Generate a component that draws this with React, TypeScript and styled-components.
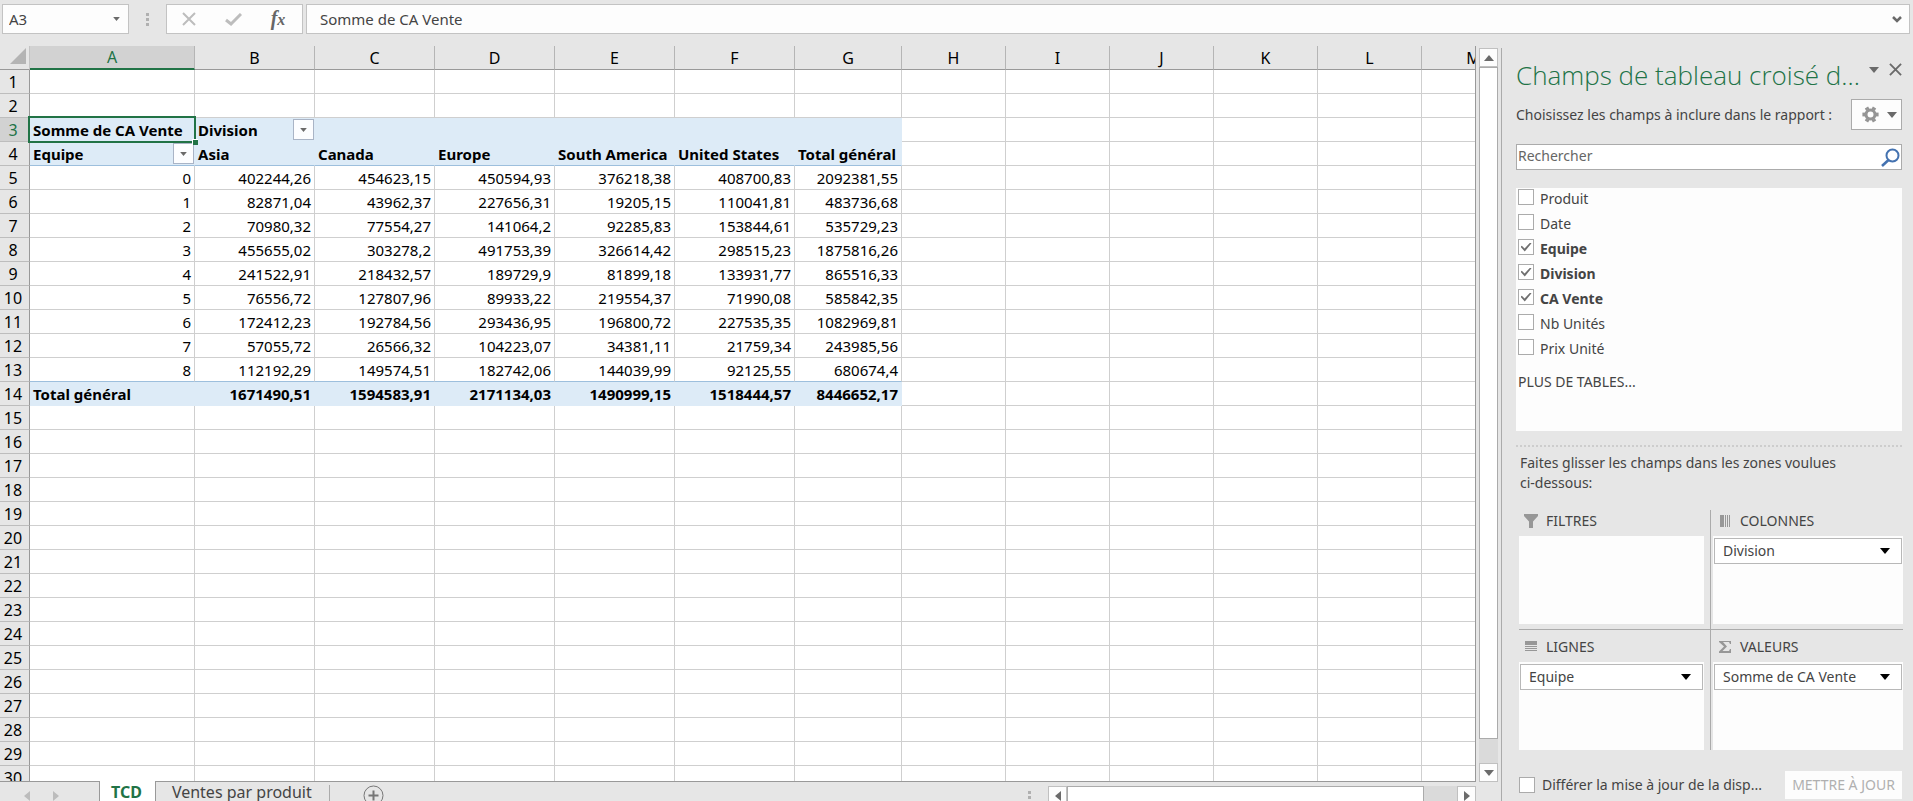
import React from 'react';
import styled, { createGlobalStyle, css } from 'styled-components';

const c = {
  chrome: '#e6e6e6',
  line: '#ababab',
  box: '#c3c3c3',
  grid: '#cfcfcf',
  edge: '#999999',
  green: '#217346',
  text: '#444444',
  fill: '#ddebf7',
  fillLine: '#9dbfdd',
  icon: '#6a6a6a',
};

const Global = createGlobalStyle`
  *, *::before, *::after { box-sizing: border-box; }
  body {
    margin: 0;
    background: ${c.chrome};
    color: ${c.text};
    font: 14px/20px "Noto Sans", "Open Sans", sans-serif;
  }
  button, input { font: inherit; color: inherit; margin: 0; }
  button { padding: 0; border: 0; background: none; }
  svg { display: block; flex: none; }
`;

const Shell = styled.div`
  display: flex;
  flex-direction: column;
  height: 100vh;
  overflow: hidden;
`;

/* ---------- formula bar ---------- */

const FormulaBar = styled.header`
  display: flex;
  flex: none;
  padding: 4px 3px 12px 2px;
  font-size: 15px;
`;

const BarBox = styled.div<{ $grow?: boolean; $width?: number }>`
  display: flex;
  align-items: center;
  height: 30px;
  border: 1px solid ${c.box};
  background: #fdfdfd;
  ${(p) => (p.$grow ? 'flex: 1; min-width: 0;' : `flex: none; width: ${p.$width}px;`)}
`;

const BarInput = styled.input<{ $indent: number }>`
  flex: 1;
  min-width: 0;
  height: 100%;
  padding: 0 0 0 ${(p) => p.$indent}px;
  border: 0;
  outline: 0;
  background: transparent;
`;

const BarButton = styled.button`
  display: flex;
  align-items: center;
  justify-content: center;
  width: 24px;
  height: 100%;
`;

const ToolGroup = styled(BarBox)`
  justify-content: space-between;
  padding: 0 12px 0 10px;
  margin-right: 3px;
`;

const Grip = styled.div`
  display: flex;
  flex: none;
  flex-direction: column;
  justify-content: center;
  align-items: center;
  gap: 2px;
  width: 37px;
  height: 30px;
  &::before, &::after { content: ''; }
  &::before, &::after, & > i { width: 3px; height: 3px; background: #b0b0b0; }
`;

const Fx = styled.span`
  font: italic bold 20px/24px "Liberation Serif", serif;
  color: #666;
  & > small { font-size: 16px; }
`;

/* ---------- sheet ---------- */

const Main = styled.div`
  display: flex;
  flex: 1;
  min-height: 0;
`;

const Workbook = styled.main`
  display: flex;
  flex: 1;
  flex-direction: column;
  min-width: 0;
`;

const SheetArea = styled.div`
  display: flex;
  flex: 1;
  min-height: 0;
`;

const Viewport = styled.div`
  flex: 1;
  min-width: 0;
  overflow: hidden;
  border-right: 1px solid ${c.edge};
  border-bottom: 1px solid ${c.edge};
`;

const Sheet = styled.table`
  width: 1526px;
  table-layout: fixed;
  border-collapse: separate;
  border-spacing: 0;
  color: #000;
  font-size: 15px;
  line-height: 21px;
`;

const Col = styled.col<{ $width: number }>`
  width: ${(p) => p.$width}px;
`;

const Corner = styled.td`
  height: 24px;
  padding: 0 3px 3px 0;
  border-right: 1px solid #c4c4c4;
  border-bottom: 1px solid ${c.edge};
  background: ${c.chrome};
  & > svg { margin-left: auto; }
`;

const ColHead = styled.th<{ $active?: boolean }>`
  height: 24px;
  padding: 2px 0 0;
  border-right: 1px solid #b5b5b5;
  border-bottom: 1px solid ${c.edge};
  background: ${c.chrome};
  font-size: 16px;
  font-weight: 400;
  ${(p) =>
    p.$active &&
    css`
      padding-top: 1px;
      border-bottom: 2px solid ${c.green};
      background: #d2d2d2;
      color: ${c.green};
    `}
`;

const RowHead = styled.th<{ $active?: boolean }>`
  height: 24px;
  padding: 2px 3px 0 0;
  border-right: 1px solid ${c.edge};
  border-bottom: 1px solid #bdbdbd;
  background: ${(p) => (p.$active ? '#d2d2d2' : c.chrome)};
  color: ${(p) => (p.$active ? c.green : '#000')};
  font-size: 16px;
  font-weight: 400;
`;

type CellStyle = { $filled?: boolean; $bold?: boolean; $num?: boolean; $rule?: boolean };

const Cell = styled.td<CellStyle>`
  position: relative;
  height: 24px;
  padding: 2px 3px 0;
  border-right: 1px solid ${(p) => (p.$filled ? c.fill : c.grid)};
  border-bottom: 1px solid ${(p) => (p.$rule ? c.fillLine : p.$filled ? c.fill : c.grid)};
  background: ${(p) => (p.$filled ? c.fill : '#fff')};
  font-weight: ${(p) => (p.$bold ? 700 : 400)};
  text-align: ${(p) => (p.$num ? 'right' : 'left')};
  white-space: nowrap;
`;

const Selection = styled.span`
  position: absolute;
  z-index: 1;
  inset: -2px;
  border: 2px solid ${c.green};
  pointer-events: none;
  &::after {
    content: '';
    position: absolute;
    right: -4px;
    bottom: -4px;
    width: 6px;
    height: 6px;
    border: solid #fff;
    border-width: 1px 0 0 1px;
    background: ${c.green};
  }
`;

const FilterButton = styled.button`
  position: absolute;
  top: 1px;
  right: 0;
  display: flex;
  align-items: center;
  justify-content: center;
  width: 21px;
  height: 21px;
  border: 1px solid #a9b4c6;
  background: #fcfdff;
`;

/* ---------- scroll bars ---------- */

const VScroll = styled.div`
  display: flex;
  flex: none;
  flex-direction: column;
  width: 25px;
  padding: 2px 3px 0;
`;

const HScroll = styled.div`
  display: flex;
  flex: none;
  width: 428px;
  height: 19px;
  margin: 4px 25px 0 0;
`;

const ScrollButton = styled.button`
  display: flex;
  flex: none;
  align-items: center;
  justify-content: center;
  width: 19px;
  height: 19px;
  border: 1px solid #c0c0c0;
  background: #fdfdfd;
`;

const Thumb = styled.div`
  flex: 1;
  border: 1px solid ${c.line};
  background: #fff;
`;

const Track = styled.div<{ $size: number }>`
  flex: 0 0 ${(p) => p.$size}px;
  background: #dadada;
`;

/* ---------- sheet tabs ---------- */

const TabStrip = styled.footer`
  display: flex;
  flex: none;
  align-items: flex-start;
  height: 19px;
  font-size: 16px;
  line-height: 20px;
`;

const TabNav = styled.div`
  display: flex;
  flex: none;
  gap: 23px;
  width: 99px;
  padding: 9px 0 0 24px;
`;

const Tab = styled.button<{ $active?: boolean }>`
  flex: none;
  height: 24px;
  ${(p) =>
    p.$active
      ? css`
          position: relative;
          margin-top: -1px;
          padding: 0 13px 2px 11px;
          border: solid ${c.edge};
          border-width: 0 1px;
          background: #fff;
          color: ${c.green};
          font-weight: 700;
        `
      : css`
          padding: 0 17px 4px 16px;
        `}
`;

const TabDivider = styled.span`
  width: 1px;
  height: 20px;
  margin-top: 3px;
  background: ${c.line};
`;

const AddSheet = styled.button`
  margin: 3px 0 0 33px;
`;

const Spacer = styled.div`
  flex: 1;
`;

/* ---------- field list pane ---------- */

const Pane = styled.aside`
  flex: none;
  width: 412px;
  margin-top: 2px;
  padding: 10px 11px 0 14px;
  border-left: 1px solid ${c.line};
`;

const PaneHead = styled.div`
  display: flex;
  align-items: flex-start;
  justify-content: space-between;
  height: 34px;
`;

const PaneTitle = styled.h1`
  margin: 0;
  color: ${c.green};
  font-family: "Open Sans", "Noto Sans", sans-serif;
  font-size: 26px;
  font-weight: 300;
  line-height: 34px;
  white-space: nowrap;
`;

const PaneButtons = styled.div`
  display: flex;
  align-items: center;
  gap: 10px;
  padding-top: 5px;
`;

const Intro = styled.div`
  display: flex;
  align-items: center;
  justify-content: space-between;
  margin-top: 7px;
`;

const GearButton = styled.button`
  display: flex;
  align-items: center;
  justify-content: space-between;
  width: 51px;
  height: 31px;
  padding: 0 4px 0 10px;
  border: 1px solid ${c.line};
  background: #fdfdfd;
`;

const Search = styled.label`
  display: flex;
  align-items: center;
  height: 26px;
  margin-top: 14px;
  padding-right: 1px;
  border: 1px solid ${c.line};
  background: #fff;
`;

const SearchInput = styled.input`
  flex: 1;
  min-width: 0;
  padding: 0 0 2px 1px;
  border: 0;
  outline: 0;
  background: transparent;
  &::placeholder { color: #666; opacity: 1; }
`;

const FieldList = styled.div`
  margin-top: 18px;
  padding: 1px 2px 39px;
  background: #fdfdfd;
`;

const FieldRow = styled.label<{ $bold?: boolean }>`
  display: flex;
  align-items: flex-start;
  gap: 6px;
  height: 25px;
  font-weight: ${(p) => (p.$bold ? 700 : 400)};
`;

const Check = styled.input`
  appearance: none;
  flex: none;
  display: grid;
  place-items: center;
  width: 16px;
  height: 16px;
  border: 1px solid ${c.line};
  background: #fff;
  &:checked::before {
    content: '';
    width: 11px;
    height: 9px;
    background: #707070;
    clip-path: polygon(0 48%, 12% 36%, 37% 68%, 88% 0, 100% 9%, 39% 100%);
  }
`;

const MoreTables = styled.a`
  display: block;
  margin-top: 8px;
  color: inherit;
  text-decoration: none;
`;

const Splitter = styled.div`
  height: 3px;
  margin-top: 14px;
  background: radial-gradient(circle at 1px 1px, #cdcdcd 1px, transparent 1px) 0 0 / 4px 3px;
`;

const Hint = styled.p`
  margin: 5px 0 0;
  padding: 0 59px 0 4px;
`;

const NoBreak = styled.span`
  white-space: nowrap;
`;

const Zones = styled.div`
  display: grid;
  grid-template-columns: 192px 1fr;
  margin: 17px -1px 0 3px;
`;

const Zone = styled.section<{ $right?: boolean; $lower?: boolean }>`
  padding: ${(p) => (p.$lower ? 6 : 0)}px ${(p) => (p.$right ? 0 : 6)}px ${(p) => (p.$lower ? 0 : 5)}px
    ${(p) => (p.$right ? 2 : 0)}px;
  border-right: ${(p) => (p.$right ? 0 : 1)}px solid ${c.line};
  border-bottom: ${(p) => (p.$lower ? 0 : 1)}px solid ${c.line};
`;

const ZoneTitle = styled.h2`
  display: flex;
  align-items: center;
  gap: 8px;
  height: 26px;
  margin: 0;
  padding: 0 0 4px 5px;
  font-size: 14px;
  font-weight: 400;
`;

const ZoneBox = styled.div`
  height: 88px;
  padding: 2px 1px;
  background: #fdfdfd;
`;

const ZoneItem = styled.button`
  display: flex;
  align-items: center;
  justify-content: space-between;
  width: 100%;
  height: 26px;
  padding: 0 11px 0 8px;
  border: 1px solid #b8b8b8;
  background: #fff;
`;

const PaneFoot = styled.div`
  display: flex;
  align-items: center;
  justify-content: space-between;
  margin: 21px 0 0 3px;
`;

const Defer = styled.label`
  display: flex;
  align-items: center;
  gap: 7px;
  white-space: nowrap;
`;

const UpdateButton = styled.button`
  width: 117px;
  height: 28px;
  background: #fdfdfd;
  color: #b0b0b0;
`;

/* ---------- icons ---------- */

const carets = {
  down: [10, 6, 'M0 0h10L5 6z'],
  up: [10, 6, 'M0 6h10L5 0z'],
  left: [6, 10, 'M6 0v10L0 5z'],
  right: [6, 10, 'M0 0v10l6-5z'],
} as const;

function Caret({ dir = 'down', color = c.icon, small }: { dir?: keyof typeof carets; color?: string; small?: boolean }) {
  const [w, h, d] = carets[dir];
  const k = small ? 0.7 : 1;
  return (
    <svg width={Math.round(w * k)} height={Math.round(h * k)} viewBox={`0 0 ${w} ${h}`} fill={color}>
      <path d={d} />
    </svg>
  );
}

const Cross = ({ size, color, weight }: { size: number; color: string; weight: number }) => (
  <svg width={size} height={size} viewBox="0 0 14 14" fill="none" stroke={color} strokeWidth={weight}>
    <path d="M1 1l12 12M13 1L1 13" />
  </svg>
);

const Gear = () => (
  <svg width="17" height="17" viewBox="0 0 17 17" fill="none" stroke="#959595">
    <circle cx="8.500" cy="8.500" r="4.500" strokeWidth="3" />
    <g strokeWidth="3.800">
      {[30, 90, 150, 210, 270, 330].map((a) => (
        <path key={a} d="M8.500 3V.4" transform={`rotate(${a} 8.500 8.500)`} />
      ))}
    </g>
  </svg>
);

const zoneIcons = {
  filter: <path d="M0 0h14v2L9 7.500V14H5V7.500L0 2z" />,
  columns: <path d="M2 1h4v12H2zM7 1h1v12H7zM9 1h1v12H9zM11 1h1v12h-1z" />,
  rows: <path d="M1 1h12v4H1zM1 6h12v1H1zM1 8h12v1H1zM1 10h12v1H1z" />,
  sigma: <path d="M1 1h12v3h-1L11 2H5l4 4.500L4.500 11H11l1-2h1v4H1v-1.500l5-5L1 2z" />,
};

const ZoneIcon = ({ name }: { name: keyof typeof zoneIcons }) => (
  <svg width="14" height="14" viewBox="0 0 14 14" fill="#979797">
    {zoneIcons[name]}
  </svg>
);

/* ---------- data ---------- */

const letters = ['A', 'B', 'C', 'D', 'E', 'F', 'G', 'H', 'I', 'J', 'K', 'L', 'M'];
const widths = [165, 120, 120, 120, 120, 120, 107, 104, 104, 104, 104, 104, 104];

const pivot: Record<number, string[]> = {
  3: ['Somme de CA Vente', 'Division', '', '', '', '', ''],
  4: ['Equipe', 'Asia', 'Canada', 'Europe', 'South America', 'United States', 'Total général'],
  5: ['0', '402244,26', '454623,15', '450594,93', '376218,38', '408700,83', '2092381,55'],
  6: ['1', '82871,04', '43962,37', '227656,31', '19205,15', '110041,81', '483736,68'],
  7: ['2', '70980,32', '77554,27', '141064,2', '92285,83', '153844,61', '535729,23'],
  8: ['3', '455655,02', '303278,2', '491753,39', '326614,42', '298515,23', '1875816,26'],
  9: ['4', '241522,91', '218432,57', '189729,9', '81899,18', '133931,77', '865516,33'],
  10: ['5', '76556,72', '127807,96', '89933,22', '219554,37', '71990,08', '585842,35'],
  11: ['6', '172412,23', '192784,56', '293436,95', '196800,72', '227535,35', '1082969,81'],
  12: ['7', '57055,72', '26566,32', '104223,07', '34381,11', '21759,34', '243985,56'],
  13: ['8', '112192,29', '149574,51', '182742,06', '144039,99', '92125,55', '680674,4'],
  14: ['Total général', '1671490,51', '1594583,91', '2171134,03', '1490999,15', '1518444,57', '8446652,17'],
};

const rowNumbers = Array.from({ length: 30 }, (_, i) => i + 1);

const fields = [
  { name: 'Produit', on: false },
  { name: 'Date', on: false },
  { name: 'Equipe', on: true },
  { name: 'Division', on: true },
  { name: 'CA Vente', on: true },
  { name: 'Nb Unités', on: false },
  { name: 'Prix Unité', on: false },
];

const zones: { title: string; icon: keyof typeof zoneIcons; item?: string }[] = [
  { title: 'FILTRES', icon: 'filter' },
  { title: 'COLONNES', icon: 'columns', item: 'Division' },
  { title: 'LIGNES', icon: 'rows', item: 'Equipe' },
  { title: 'VALEURS', icon: 'sigma', item: 'Somme de CA Vente' },
];

/* ---------- parts ---------- */

function SheetRow({ n }: { n: number }) {
  const banded = n === 3 || n === 4 || n === 14;
  return (
    <tr>
      <RowHead scope="row" $active={n === 3}>{n}</RowHead>
      {letters.map((l, i) => {
        const inPivot = i < 7 && n in pivot;
        const value = inPivot ? pivot[n][i] : '';
        return (
          <Cell
            key={l}
            $filled={inPivot && banded}
            $bold={banded}
            $num={/^\d/.test(value)}
            $rule={inPivot && (n === 4 || n === 13)}
          >
            {value}
            {((n === 3 && i === 1) || (n === 4 && i === 0)) && (
              <FilterButton aria-label={`Filtrer ${value}`}>
                <Caret small />
              </FilterButton>
            )}
            {n === 3 && i === 0 && <Selection />}
          </Cell>
        );
      })}
    </tr>
  );
}

function FieldPane() {
  return (
    <Pane>
      <PaneHead>
        <PaneTitle>Champs de tableau croisé d...</PaneTitle>
        <PaneButtons>
          <button aria-label="Options du volet"><Caret /></button>
          <button aria-label="Fermer"><Cross size={13} color={c.icon} weight={2} /></button>
        </PaneButtons>
      </PaneHead>
      <Intro>
        <span>Choisissez les champs à inclure dans le rapport :</span>
        <GearButton aria-label="Outils">
          <Gear />
          <Caret />
        </GearButton>
      </Intro>
      <Search>
        <SearchInput type="text" placeholder="Rechercher" aria-label="Rechercher" />
        <svg width="19" height="19" viewBox="0 0 19 19" fill="none" stroke="#4472b0" strokeWidth="2">
          <circle cx="11.500" cy="7.500" r="6" />
          <path d="M7.500 12L1 18" strokeWidth="2.600" />
        </svg>
      </Search>
      <FieldList>
        {fields.map((f) => (
          <FieldRow key={f.name} $bold={f.on}>
            <Check type="checkbox" defaultChecked={f.on} />
            {f.name}
          </FieldRow>
        ))}
        <MoreTables href="#tables">PLUS DE TABLES...</MoreTables>
      </FieldList>
      <Splitter />
      <Hint>
        Faites glisser les champs dans les zones voulues <NoBreak>ci-dessous:</NoBreak>
      </Hint>
      <Zones>
        {zones.map((z, i) => (
          <Zone key={z.title} $right={i % 2 === 1} $lower={i > 1}>
            <ZoneTitle>
              <ZoneIcon name={z.icon} />
              {z.title}
            </ZoneTitle>
            <ZoneBox>
              {z.item && (
                <ZoneItem aria-haspopup="menu">
                  {z.item}
                  <Caret color="#000" />
                </ZoneItem>
              )}
            </ZoneBox>
          </Zone>
        ))}
      </Zones>
      <PaneFoot>
        <Defer>
          <Check type="checkbox" />
          Différer la mise à jour de la disp...
        </Defer>
        <UpdateButton disabled>METTRE À JOUR</UpdateButton>
      </PaneFoot>
    </Pane>
  );
}

export default function App() {
  return (
    <Shell>
      <Global />
      <FormulaBar>
        <BarBox $width={127}>
          <BarInput $indent={6} defaultValue="A3" aria-label="Zone Nom" />
          <BarButton aria-label="Noms"><Caret small /></BarButton>
        </BarBox>
        <Grip><i /></Grip>
        <ToolGroup $width={137}>
          <BarButton aria-label="Annuler"><Cross size={14} color="#bdbdbd" weight={2} /></BarButton>
          <BarButton aria-label="Entrer">
            <svg width="17" height="13" viewBox="0 0 17 13" fill="none" stroke="#bdbdbd" strokeWidth="3">
              <path d="M1 7l5 4L16 1" />
            </svg>
          </BarButton>
          <BarButton aria-label="Insérer une fonction"><Fx>f<small>x</small></Fx></BarButton>
        </ToolGroup>
        <BarBox $grow>
          <BarInput $indent={13} defaultValue="Somme de CA Vente" aria-label="Barre de formule" />
          <BarButton aria-label="Développer">
            <svg width="10" height="7" viewBox="0 0 10 7" fill="none" stroke={c.icon} strokeWidth="2.500">
              <path d="M1 1l4 4 4-4" />
            </svg>
          </BarButton>
        </BarBox>
      </FormulaBar>
      <Main>
        <Workbook>
          <SheetArea>
            <Viewport>
              <Sheet>
                <colgroup>
                  <Col $width={30} />
                  {widths.map((w, i) => <Col key={letters[i]} $width={w} />)}
                </colgroup>
                <thead>
                  <tr>
                    <Corner>
                      <svg width="16" height="16" viewBox="0 0 16 16" fill="#b4b4b4"><path d="M16 0v16H0z" /></svg>
                    </Corner>
                    {letters.map((l) => <ColHead key={l} scope="col" $active={l === 'A'}>{l}</ColHead>)}
                  </tr>
                </thead>
                <tbody>
                  {rowNumbers.map((n) => <SheetRow key={n} n={n} />)}
                </tbody>
              </Sheet>
            </Viewport>
            <VScroll>
              <ScrollButton aria-label="Haut"><Caret dir="up" /></ScrollButton>
              <Thumb />
              <Track $size={24} />
              <ScrollButton aria-label="Bas"><Caret /></ScrollButton>
            </VScroll>
          </SheetArea>
          <TabStrip>
            <TabNav>
              <Caret dir="left" color="#bcbcbc" />
              <Caret dir="right" color="#bcbcbc" />
            </TabNav>
            <Tab $active>TCD</Tab>
            <Tab>Ventes par produit</Tab>
            <TabDivider />
            <AddSheet aria-label="Nouvelle feuille">
              <svg width="21" height="21" viewBox="0 0 21 21" fill="none" stroke="#777">
                <circle cx="10.500" cy="10.500" r="9.500" />
                <path d="M10.500 5.500v10M5.500 10.500h10" strokeWidth="2" />
              </svg>
            </AddSheet>
            <Spacer />
            <Grip><i /></Grip>
            <HScroll>
              <ScrollButton aria-label="Gauche"><Caret dir="left" /></ScrollButton>
              <Thumb />
              <Track $size={33} />
              <ScrollButton aria-label="Droite"><Caret dir="right" /></ScrollButton>
            </HScroll>
          </TabStrip>
        </Workbook>
        <FieldPane />
      </Main>
    </Shell>
  );
}
